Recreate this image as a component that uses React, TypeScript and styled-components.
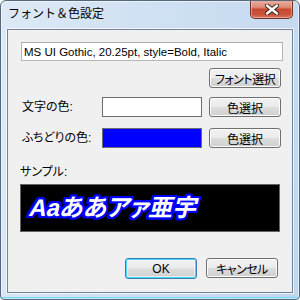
import { createGlobalStyle } from 'styled-components'
import styled from 'styled-components'

const GlobalStyle = createGlobalStyle`
  html, body {
    margin: 0;
    padding: 0;
    background: #ffffff;
  }
  body {
    font-family: "Liberation Sans", "Noto Sans CJK JP", sans-serif;
    font-size: 12px;
    font-feature-settings: "palt";
    color: #000;
  }
`

export default function App() {
  return (
    <>
      <GlobalStyle />
      <Window>
        <TitleBar>
          <Title>フォント＆色設定</Title>
          <CloseButton aria-label="閉じる">
            <svg width="14" height="11" viewBox="0 0 14 11">
              <path d="M2 1.5 L12 9.5 M12 1.5 L2 9.5" stroke="#3b2520" strokeWidth="4.4" strokeLinecap="round" />
              <path d="M2 1.5 L12 9.5 M12 1.5 L2 9.5" stroke="#ffffff" strokeWidth="2.4" strokeLinecap="round" />
            </svg>
          </CloseButton>
        </TitleBar>

        <Client>
          <FontBox>MS UI Gothic, 20.25pt, style=Bold, Italic</FontBox>

          <ButtonRow>
            <Button $narrow>フォント選択</Button>
          </ButtonRow>

          <ColorSection>
            <Column $width={80}>
              <Label>文字の色:</Label>
              <Label>ふちどりの色:</Label>
            </Column>
            <Column $width={100}>
              <Swatch $color="#ffffff" />
              <Swatch $color="#0000ff" />
            </Column>
            <Column $width={72}>
              <Button>色選択</Button>
              <Button>色選択</Button>
            </Column>
          </ColorSection>

          <SampleLabel>サンプル:</SampleLabel>
          <SampleBox>
            <SampleText>Aaああアァ亜宇</SampleText>
          </SampleBox>

          <Footer>
            <Button $default>OK</Button>
            <Button $narrow>キャンセル</Button>
          </Footer>
        </Client>
      </Window>
    </>
  )
}

const Window = styled.div`
  width: 300px;
  height: 300px;
  box-sizing: border-box;
  display: flex;
  flex-direction: column;
  border: 1px solid #56677c;
  border-radius: 6px 6px 4px 4px;
  background: linear-gradient(100deg, #dde9f6 0%, #cfe0f3 45%, #c2d7ee 100%);
  box-shadow: inset 0 0 0 1px rgba(255, 255, 255, 0.55), inset 0 -2px 0 #74d8f4;
  overflow: hidden;
`

const TitleBar = styled.div`
  height: 28px;
  flex: none;
  display: flex;
  justify-content: space-between;
  align-items: flex-start;
  padding-left: 7px;
`

const Title = styled.div`
  margin-top: 4px;
  line-height: 16px;
  font-size: 12px;
  font-family: "Noto Sans CJK JP", sans-serif;
  font-feature-settings: normal;
  color: #000;
`

const CloseButton = styled.div`
  width: 43px;
  height: 19px;
  box-sizing: border-box;
  margin-top: -1px;
  margin-right: 6px;
  display: flex;
  align-items: center;
  justify-content: center;
  border: 1px solid #6d3328;
  border-top: none;
  border-radius: 0 0 5px 5px;
  background: linear-gradient(180deg, #e9b2a4 0%, #de8c78 40%, #c84a30 52%, #c9533a 80%, #d77a5e 100%);
  box-shadow: inset 0 0 0 1px rgba(255, 220, 210, 0.45);
`

const Client = styled.div`
  flex: 1;
  margin: 0 6px 6px;
  display: flex;
  flex-direction: column;
  padding: 12px 0 0 12px;
  background: #f0f0f0;
  border: 1px solid #73849a;
  box-shadow: 0 0 0 1px rgba(255, 255, 255, 0.7);
`

const FontBox = styled.div`
  width: 262px;
  height: 19px;
  box-sizing: border-box;
  margin-left: 1px;
  padding-left: 2px;
  display: flex;
  align-items: center;
  background: #fff;
  border: 1px solid #b4b7bd;
  border-top-color: #abadb3;
  font-size: 11.5px;
`

const ButtonRow = styled.div`
  display: flex;
  justify-content: flex-end;
  margin-top: 7px;
  padding-right: 11px;
`

const Button = styled.div<{ $default?: boolean; $narrow?: boolean }>`
  flex: none;
  width: 72px;
  height: ${({ $default }) => ($default ? 21 : 20)}px;
  box-sizing: border-box;
  display: flex;
  align-items: center;
  justify-content: center;
  border: 1px solid ${({ $default }) => ($default ? '#3c7fb1' : '#707070')};
  border-radius: 3px;
  background: linear-gradient(180deg, #f2f2f2 0%, #ebebeb 48%, #dddddd 52%, #cfcfcf 100%);
  box-shadow: ${({ $default }) =>
    $default ? 'inset 0 0 0 1px #48d8fb, inset 0 0 0 2px rgba(255,255,255,0.5)' : 'inset 0 0 0 1px #fcfcfc'};
  font-size: 12px;
  letter-spacing: ${({ $narrow }) => ($narrow ? '-0.5px' : '0')};
  color: #000;
`

const ColorSection = styled.div`
  display: flex;
  gap: 0;
  margin-top: 9px;
  padding-left: 2px;
`

const Column = styled.div<{ $width: number }>`
  flex: none;
  width: ${({ $width }) => $width}px;
  display: flex;
  flex-direction: column;
  gap: 11px;

  & + & + & {
    margin-left: 7px;
  }
`

const Label = styled.div`
  height: 20px;
  line-height: 20px;
  font-size: 12px;
  white-space: nowrap;
`

const Swatch = styled.div<{ $color: string }>`
  height: 20px;
  box-sizing: border-box;
  background: ${({ $color }) => $color};
  border: 1px solid #6e6e6e;
`

const SampleLabel = styled.div`
  margin-top: 16px;
  line-height: 16px;
`

const SampleBox = styled.div`
  width: 260px;
  height: 48px;
  box-sizing: border-box;
  margin-top: 4px;
  padding-left: 9px;
  display: flex;
  align-items: center;
  background: #000;
  border: 1px solid #646464;
`

const SampleText = styled.span`
  display: inline-block;
  transform: skewX(-14deg);
  font-family: "Liberation Sans", "Noto Sans CJK JP", sans-serif;
  font-size: 24px;
  font-weight: bold;
  color: #fff;
  line-height: 1;
  text-shadow:
    2px 0 0 #0000ff, -2px 0 0 #0000ff, 0 2px 0 #0000ff, 0 -2px 0 #0000ff,
    2px 2px 0 #0000ff, -2px -2px 0 #0000ff, 2px -2px 0 #0000ff, -2px 2px 0 #0000ff,
    1px 2px 0 #0000ff, -1px 2px 0 #0000ff, 2px 1px 0 #0000ff, -2px 1px 0 #0000ff,
    1px -2px 0 #0000ff, -1px -2px 0 #0000ff, 2px -1px 0 #0000ff, -2px -1px 0 #0000ff;
`

const Footer = styled.div`
  display: flex;
  justify-content: flex-end;
  gap: 9px;
  margin-top: 26px;
  padding-right: 14px;
`
